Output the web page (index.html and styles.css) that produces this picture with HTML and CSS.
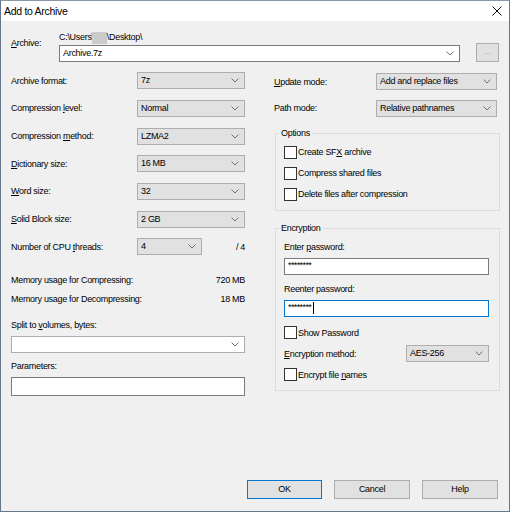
FILE: index.html
```html
<!DOCTYPE html>
<html>
<head>
<meta charset="utf-8">
<link rel="stylesheet" href="styles.css">
</head>
<body>
<div class="window">
  <div class="titlebar">
    <span class="title">Add to Archive</span>
    <svg class="close" width="10" height="10" viewBox="0 0 10 10"><path d="M0.5 0.5 L9.5 9.5 M9.5 0.5 L0.5 9.5" stroke="#111" stroke-width="1" fill="none"/></svg>
  </div>
  <div class="body">
    <div class="archive-row">
      <div class="archive-label"><u>A</u>rchive:</div>
      <div class="archive-main">
        <div class="path">C:\Users\<span class="redact"></span>\Desktop\</div>
        <div class="combo edit wide"><span class="val">Archive.7z</span><svg class="chev" width="8" height="5" viewBox="0 0 8 5"><path d="M0.5 0.5 L4 4 L7.5 0.5" stroke="#707070" fill="none"/></svg></div>
      </div>
      <div class="browse">...</div>
    </div>

    <div class="columns">
      <div class="left">
        <div class="row"><span class="lbl">Archive format:</span><div class="combo"><span class="val">7z</span><svg class="chev" width="8" height="5" viewBox="0 0 8 5"><path d="M0.5 0.5 L4 4 L7.5 0.5" stroke="#707070" fill="none"/></svg></div></div>
        <div class="row"><span class="lbl">Compression <u>l</u>evel:</span><div class="combo"><span class="val">Normal</span><svg class="chev" width="8" height="5" viewBox="0 0 8 5"><path d="M0.5 0.5 L4 4 L7.5 0.5" stroke="#707070" fill="none"/></svg></div></div>
        <div class="row"><span class="lbl">Compression <u>m</u>ethod:</span><div class="combo"><span class="val">LZMA2</span><svg class="chev" width="8" height="5" viewBox="0 0 8 5"><path d="M0.5 0.5 L4 4 L7.5 0.5" stroke="#707070" fill="none"/></svg></div></div>
        <div class="row"><span class="lbl"><u>D</u>ictionary size:</span><div class="combo"><span class="val">16 MB</span><svg class="chev" width="8" height="5" viewBox="0 0 8 5"><path d="M0.5 0.5 L4 4 L7.5 0.5" stroke="#707070" fill="none"/></svg></div></div>
        <div class="row"><span class="lbl"><u>W</u>ord size:</span><div class="combo"><span class="val">32</span><svg class="chev" width="8" height="5" viewBox="0 0 8 5"><path d="M0.5 0.5 L4 4 L7.5 0.5" stroke="#707070" fill="none"/></svg></div></div>
        <div class="row"><span class="lbl"><u>S</u>olid Block size:</span><div class="combo"><span class="val">2 GB</span><svg class="chev" width="8" height="5" viewBox="0 0 8 5"><path d="M0.5 0.5 L4 4 L7.5 0.5" stroke="#707070" fill="none"/></svg></div></div>
        <div class="row"><span class="lbl">Number of CPU <u>t</u>hreads:</span><div class="combo small"><span class="val">4</span><svg class="chev" width="8" height="5" viewBox="0 0 8 5"><path d="M0.5 0.5 L4 4 L7.5 0.5" stroke="#707070" fill="none"/></svg></div><span class="of">/ 4</span></div>

        <div class="memory">
          <div class="mrow"><span>Memory usage for Compressing:</span><span>720 MB</span></div>
          <div class="mrow"><span>Memory usage for Decompressing:</span><span>18 MB</span></div>
        </div>

        <div class="plabel split-label">Split to <u>v</u>olumes, bytes:</div>
        <div class="combo edit full"><span class="val"></span><svg class="chev" width="8" height="5" viewBox="0 0 8 5"><path d="M0.5 0.5 L4 4 L7.5 0.5" stroke="#707070" fill="none"/></svg></div>
        <div class="plabel params-label">Parameters:</div>
        <div class="textbox params"></div>
      </div>

      <div class="right">
        <div class="rrow first"><span class="rlbl"><u>U</u>pdate mode:</span><div class="combo rcombo"><span class="val">Add and replace files</span><svg class="chev" width="8" height="5" viewBox="0 0 8 5"><path d="M0.5 0.5 L4 4 L7.5 0.5" stroke="#707070" fill="none"/></svg></div></div>
        <div class="rrow"><span class="rlbl">Path mode:</span><div class="combo rcombo"><span class="val">Relative pathnames</span><svg class="chev" width="8" height="5" viewBox="0 0 8 5"><path d="M0.5 0.5 L4 4 L7.5 0.5" stroke="#707070" fill="none"/></svg></div></div>

        <fieldset class="group options">
          <legend>Options</legend>
          <div class="check"><span class="box"></span><span>Create SF<u>X</u> archive</span></div>
          <div class="check"><span class="box"></span><span>Compress shared files</span></div>
          <div class="check"><span class="box"></span><span>Delete files after compression</span></div>
        </fieldset>

        <fieldset class="group encryption">
          <legend>Encryption</legend>
          <div class="elabel first">Enter <u>p</u>assword:</div>
          <div class="textbox pw"><span class="stars">********</span></div>
          <div class="elabel">Reenter password:</div>
          <div class="textbox pw focus"><span class="stars">********</span><span class="caret"></span></div>
          <div class="check showpw"><span class="box"></span><span>Show Password</span></div>
          <div class="erow"><span class="erlbl"><u>E</u>ncryption method:</span><div class="combo ecombo"><span class="val">AES-256</span><svg class="chev" width="8" height="5" viewBox="0 0 8 5"><path d="M0.5 0.5 L4 4 L7.5 0.5" stroke="#707070" fill="none"/></svg></div></div>
          <div class="check"><span class="box"></span><span>Encrypt file <u>n</u>ames</span></div>
        </fieldset>
      </div>
    </div>

    <div class="buttons">
      <div class="btn default">OK</div>
      <div class="btn">Cancel</div>
      <div class="btn">Help</div>
    </div>
  </div>
</div>
</body>
</html>
```

FILE: styles.css
```css
* { box-sizing: border-box; }
html, body { margin: 0; padding: 0; background: #f0f0f0; }
body {
  font-family: "Liberation Sans", Arial, sans-serif;
  font-size: 9px;
  letter-spacing: -0.3px;
  color: #000;
}
u { text-decoration: underline; text-underline-offset: 1px; }

.window {
  width: 510px;
  height: 512px;
  border: 1px solid #66768c;
  border-top-color: #8a97a8;
  background: #f0f0f0;
  display: flex;
  flex-direction: column;
}

.titlebar {
  height: 20px;
  background: #fff;
  display: flex;
  align-items: center;
  justify-content: space-between;
  padding: 0 7px 0 3px;
  flex: none;
}
.title { font-size: 10.5px; letter-spacing: -0.3px; line-height: 20px; }
.close { display: block; }

.body {
  flex: 1;
  display: flex;
  flex-direction: column;
  padding: 10px 10px 12px 10px;
}

/* archive row */
.archive-row { display: flex; height: 31px; flex: none; }
.archive-label { width: 48px; margin-top: 6px; line-height: 13px; }
.archive-main { width: 401px; display: flex; flex-direction: column; }
.path { line-height: 13px; height: 13px; display: flex; align-items: center; }
.redact { display: inline-block; width: 15px; height: 12px; background: #cbcbcb; margin: 0 0 0 -2px; }
.archive-main .combo { margin-top: 1px; }
.browse {
  margin-left: 16px;
  margin-top: 12px;
  width: 23px;
  height: 19px;
  background: #e1e1e1;
  border: 1px solid #adadad;
  color: #9a9a9a;
  text-align: center;
  line-height: 15px;
  font-size: 8px;
}

/* combos */
.combo {
  height: 17px;
  background: #e1e1e1;
  border: 1px solid #adadad;
  display: flex;
  align-items: center;
  justify-content: space-between;
  padding: 0 5px 0 3px;
  flex: none;
}
.combo .val { line-height: 15px; white-space: nowrap; }
.combo .chev { display: block; flex: none; }
.combo.edit { background: #fff; border-color: #7a7a7a; }
.combo.wide { width: 401px; }
.combo.full { width: 234px; margin-top: 4px; border-color: #adadad; }

.textbox { background: #fff; border: 1px solid #7a7a7a; }

.columns { display: flex; gap: 29px; margin-top: 5px; flex: none; }
.left { width: 234px; display: flex; flex-direction: column; }
.right { width: 225px; display: flex; flex-direction: column; }

.row { height: 27.67px; display: flex; align-items: center; }
.lbl { width: 126px; flex: none; }
.row .combo { width: 108px; }
.row .combo.small { width: 65px; }
.of { flex: 1; text-align: right; }

.memory { margin-top: 10px; }
.mrow { height: 19px; display: flex; align-items: center; justify-content: space-between; }

.plabel { line-height: 13px; }
.split-label { margin-top: 10px; }
.params-label { margin-top: 7px; }
.params { width: 234px; height: 19px; margin-top: 4px; }

.rrow { height: 26px; display: flex; align-items: center; }
.rrow.first { margin-top: 1px; height: 27px; }
.rlbl { width: 102px; flex: none; }
.rcombo { width: 121px; }

.group {
  margin: 0 -1px 0 1px;
  border: 1px solid #dcdcdc;
  padding: 0 10px 0 8px;
  min-width: 0;
}
.group legend {
  padding: 0 2px;
  margin-left: -5px;
  line-height: 13px;
  color: #000;
}
.options { margin-top: 5.5px; padding-top: 2px; padding-bottom: 5.5px; }
.encryption { margin-top: 10.5px; padding-top: 6px; padding-bottom: 4.5px; }

.check { height: 21px; display: flex; align-items: center; }
.box {
  width: 13px;
  height: 13px;
  border: 1px solid #333;
  background: #fff;
  margin-right: 1px;
  flex: none;
}

.elabel { line-height: 13px; margin-top: 8.5px; }
.elabel.first { margin-top: 0; }
.pw { height: 17px; margin-top: 4px; display: flex; align-items: flex-start; padding-left: 3px; }
.pw.focus { border-color: #0078d7; margin-top: 3.5px; }
.stars { font-size: 9px; letter-spacing: -0.6px; line-height: 11px; padding-top: 1px; }
.caret { width: 1px; height: 12px; background: #000; margin: 1px 0 0 2px; }
.showpw { margin-top: 5.5px; }

.erow { height: 21px; display: flex; align-items: center; }
.erlbl { width: 122px; flex: none; }
.ecombo { width: 83px; }

.buttons {
  margin-top: auto;
  display: flex;
  justify-content: flex-end;
  gap: 12px;
  padding-right: 1px;
  flex: none;
}
.btn {
  width: 76px;
  height: 19px;
  background: #e1e1e1;
  border: 1px solid #adadad;
  text-align: center;
  line-height: 17px;
}
.btn.default { width: 75px; border-color: #0078d7; }
```
